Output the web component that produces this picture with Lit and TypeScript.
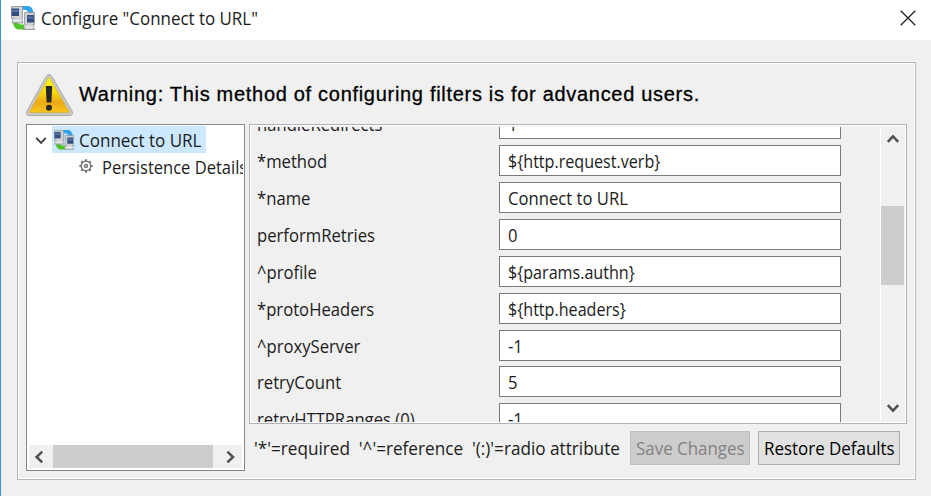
import { LitElement, html, svg, css } from "lit";
import { customElement, property } from "lit/decorators.js";
import { classMap } from "lit/directives/class-map.js";

const chevron = (d: string) => html`<svg width="14" height="14" viewBox="0 0 14 14">
  <path d=${d} fill="none" stroke="#505050" stroke-width="2.5" /></svg>`;

const LEFT = "M10.200 1.600 L4.600 7 L10.200 12.400";
const RIGHT = "M4.400 1.600 L10 7 L4.400 12.400";
const UP = "M1.800 9.800 L7 4.400 L12.200 9.800";
const DOWN = "M1.800 4.200 L7 9.600 L12.200 4.200";

@customElement("connect-icon")
class ConnectIcon extends LitElement {
  @property({ type: Number }) size = 24;
  static styles = css`:host { display: block; flex: none; } svg { display: block; }`;
  render() {
    return html`<svg width=${this.size} height=${this.size} viewBox="0 0 24 24">
      <path d="M11 0H17Q22 0 22.500 8H17.500Q17.500 4 13 3.800H11Z" fill="#2fa4e8" />
      <path d="M2 16H7Q7 18.500 10 18.500H13V23.500H7Q2.500 22.500 2 16Z" fill="#4fc426" />
      <path d="M.5 .5H11.500V12.500H10.500L12 17H1L2.500 12.500H.5Z" fill="#cfd1d3" stroke="#8b8e92" stroke-width=".8" />
      <rect x=".5" y="2.500" width="7.500" height="7.500" fill="#334d80" />
      <path d="M1 4H7.500V6H1Z" fill="#5b77aa" />
      <path d="M2 14.500H11" stroke="#eeefef" stroke-width="1.500" />
      <path d="M13.500 6.500H23.500V18.500H22L23.500 23.500H12.500L14.500 18.500H13.500Z" fill="#cfd1d3" stroke="#8b8e92" stroke-width=".8" />
      <rect x="16" y="9" width="7" height="7.500" fill="#334d80" />
      <path d="M16.500 10.500H22.500V12.500H16.500Z" fill="#5b77aa" />
      <path d="M14 21H22.500" stroke="#eeefef" stroke-width="1.500" />
    </svg>`;
  }
}

@customElement("property-row")
class PropertyRow extends LitElement {
  @property() name = "";
  @property() value = "";
  static styles = css`
    :host { display: flex; height: 31px; flex: none; align-items: stretch; }
    .name { width: 242px; line-height: 31px; padding-top: 1px; box-sizing: border-box; }
    .field { width: 342px; height: 31px; box-sizing: border-box; border: 1px solid #7a7a7a;
      background: #fff; padding-left: 7.5px; line-height: 30px; }
    .t { display: inline-block; transform: scaleX(.925); transform-origin: 0 50%; white-space: pre; }
    .expr { transform: scaleX(.895); }
  `;
  render() {
    return html`<div class="name"><span class="t">${this.name}</span></div>
      <div class="field"><span class=${classMap({ t: true, expr: this.value.startsWith("$") })}>${this.value}</span></div>`;
  }
}

const ROWS = [
  ["handleRedirects", "1"],
  ["*method", "${http.request.verb}"],
  ["*name", "Connect to URL"],
  ["performRetries", "0"],
  ["^profile", "${params.authn}"],
  ["*protoHeaders", "${http.headers}"],
  ["^proxyServer", "-1"],
  ["retryCount", "5"],
  ["retryHTTPRanges (0)", "-1"],
];

@customElement("app-root")
class AppRoot extends LitElement {
  static styles = css`
    * { box-sizing: border-box; }
    :host { display: block; width: 931px; height: 496px; overflow: hidden; background: #f0f0f0;
      border-left: 1px solid #3f94dc; box-sizing: border-box; color: #1c1c1c;
      font: 18px/24px "Open Sans", "Noto Sans", sans-serif; }
    svg { display: block; flex: none; }
    .t { display: inline-block; transform: scaleX(.94); transform-origin: 0 50%; white-space: pre; }
    .title { height: 40px; background: #fff; display: flex; align-items: center; padding: 0 15px 4px 10px; }
    .title .t { flex: 1; margin-left: 6px; }
    .frame { margin: 22px 15px 0 16px; height: 418px; border: 1px solid #b6b7bf;
      box-shadow: inset 0 0 0 1px #fff; padding: 8px 7px 0 8px; }
    .warning { height: 53px; display: flex; align-items: flex-start; color: #000; }
    .warning svg { margin-top: 1px; }
    .warning span { margin: 11px 0 0 4px; font: 20px/24px "Liberation Sans", sans-serif; letter-spacing: .7px;
      -webkit-text-stroke: .3px #000; white-space: pre; }
    .body { display: flex; gap: 4px; }
    .tree { width: 219px; height: 347px; border: 1px solid #828790; background: #fff;
      display: flex; flex-direction: column; padding: 1px 2px 2px; }
    .node { height: 27px; display: flex; align-items: center; flex: none; overflow: hidden; }
    .node .expand { margin: 0 5px 0 6px; }
    .selected { background: #cce8ff; height: 27px; display: flex; align-items: center; width: 154px; padding-left: 2px; }
    .selected .t { margin-left: 5px; transform: scaleX(.945); }
    .child { padding-left: 50px; margin-right: -1px; }
    .child svg { margin-bottom: 2px; }
    .child .t { margin-left: 9px; transform: scaleX(.918); }
    .hbar { margin-top: auto; height: 23px; background: #f0f0f0; display: flex; align-items: center; padding: 0 5px 0 3px; }
    .hthumb { width: 160px; height: 23px; background: #cdcdcd; margin-left: 7px; margin-right: auto; }
    .side { width: 658px; }
    .form { height: 300px; border: 1px solid #b0b1ba; box-shadow: inset 0 0 0 1px #fff; padding: 2px; display: flex; }
    .rows { width: 628px; height: 295px; overflow: hidden; display: flex; flex-direction: column; flex: none; padding-left: 5px; }
    .stack { display: flex; flex-direction: column; gap: 5.9px; margin-top: -18.8px; flex: none; }
    .vbar { flex: 1; border-left: 1px solid #fff; display: flex; flex-direction: column;
      align-items: center; padding: 5px 2px 6px 0; }
    .vthumb { width: 23px; height: 79px; background: #cdcdcd; margin: 60px 0 auto; }
    .foot { display: flex; padding: 7px 0 0 5px; height: 41px; }
    .legend { width: 376px; line-height: 34px; flex: none; }
    .legend .t { transform: scaleX(.953); }
    .btn { height: 34px; line-height: 33px; border: 1px solid #adadad; background: #e1e1e1; padding-left: 5px;
      color: #000; flex: none; }
    .save { width: 120px; background: #ccc; border-color: #bfbfbf; color: #838383; margin-right: 8px; }
    .restore { width: 142px; }
  `;
  render() {
    const teeth = [0, 45, 90, 135, 180, 225, 270, 315];
    return html`
      <div class="title">
        <connect-icon .size=${24}></connect-icon><span class="t">Configure "Connect to URL"</span>
        <svg width="16" height="16" viewBox="0 0 16 16"><path d="M.7.7 15.3 15.3M15.3.7.7 15.3" stroke="#222" stroke-width="1.3" /></svg>
      </div>
      <div class="frame">
        <div class="warning">
          <svg width="49" height="46" viewBox="0 0 49 46">
            <defs><linearGradient id="w" x2="0" y2="1"><stop stop-color="#ffff12" /><stop offset=".4" stop-color="#f9dc08" />
              <stop offset=".72" stop-color="#eda916" /><stop offset="1" stop-color="#fbc51c" /></linearGradient></defs>
            <path d="M23 2.500 Q25 2.500 26.500 5.500L46 39Q47.500 43.500 44 43.500H3Q-.5 43.500 1 39L19.500 5.500Q21 2.500 23 2.500Z" fill="#c8c8c6" stroke="#aaa" />
            <path d="M23 5 L43.500 40.500H3Z" fill="url(#w)" stroke="#d3ad26" stroke-width=".6" />
            <path d="M19.800 14H26.200L25.400 30.500H20.600Z" fill="#24282d" />
            <circle cx="23" cy="35.800" r="3" fill="#24282d" />
          </svg>
          <span>Warning: This method of configuring filters is for advanced users.</span>
        </div>
        <div class="body">
          <div class="tree">
            <div class="node">
              <svg class="expand" width="12" height="12" viewBox="0 0 12 12"><path d="M1.200 3.800 6 8.800 10.800 3.800" fill="none" stroke="#404040" stroke-width="1.9" /></svg>
              <div class="selected"><connect-icon .size=${20}></connect-icon><span class="t">Connect to URL</span></div>
            </div>
            <div class="node child">
              <svg width="14" height="14" viewBox="0 0 14 14" stroke="#777" fill="none">
                ${teeth.map((a) => svg`<path d="M7 .3V2.500" stroke-width="2" transform="rotate(${a} 7 7)" />`)}
                <circle cx="7" cy="7" r="4.700" stroke-width="1.500" /><circle cx="7" cy="7" r="1.500" stroke-width="1.500" />
              </svg>
              <span class="t">Persistence Details</span>
            </div>
            <div class="hbar">${chevron(LEFT)}<div class="hthumb"></div>${chevron(RIGHT)}</div>
          </div>
          <div class="side">
            <div class="form">
              <div class="rows"><div class="stack">${ROWS.map(([n, v]) => html`<property-row .name=${n} .value=${v}></property-row>`)}</div></div>
              <div class="vbar">${chevron(UP)}<div class="vthumb"></div>${chevron(DOWN)}</div>
            </div>
            <div class="foot">
              <div class="legend"><span class="t">'*'=required  '^'=reference  '(:)'=radio attribute</span></div>
              <div class="btn save"><span class="t">Save Changes</span></div>
              <div class="btn restore"><span class="t">Restore Defaults</span></div>
            </div>
          </div>
        </div>
      </div>`;
  }
}
